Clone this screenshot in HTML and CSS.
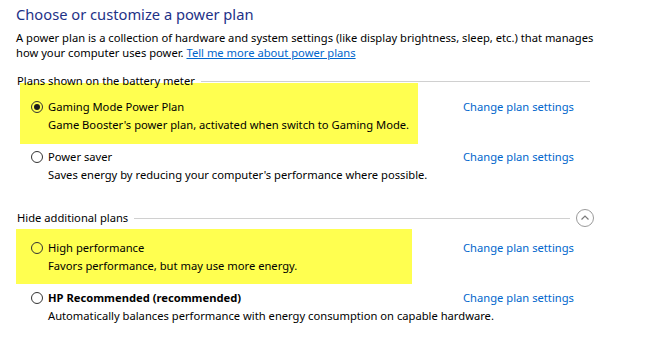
FILE: index.html
```html
<!DOCTYPE html>
<html lang="en">
<head>
  <meta charset="UTF-8" />
  <meta name="viewport" content="width=device-width, initial-scale=1.0" />
  <title>Power Options</title>
  <link rel="stylesheet" href="styles.css">
</head>
<body>
  <main class="page">
    <h1 class="title">Choose or customize a power plan</h1>
    <p class="intro">A power plan is a collection of hardware and system settings (like display brightness, sleep, etc.) that manages<br>how your computer uses power. <a href="#">Tell me more about power plans</a></p>

    <section class="group">
      <div class="group-head">
        <span>Plans shown on the battery meter</span>
        <span class="rule"></span>
      </div>

      <div class="plan">
        <div class="plan-info mark-a">
          <label class="plan-name"><span class="radio checked"></span>Gaming Mode Power Plan</label>
          <div class="plan-desc">Game Booster's power plan, activated when switch to Gaming Mode.</div>
        </div>
        <a class="plan-link" href="#">Change plan settings</a>
      </div>

      <div class="plan">
        <div class="plan-info">
          <label class="plan-name"><span class="radio"></span>Power saver</label>
          <div class="plan-desc">Saves energy by reducing your computer's performance where possible.</div>
        </div>
        <a class="plan-link" href="#">Change plan settings</a>
      </div>
    </section>

    <section class="group group-extra">
      <div class="group-head">
        <span>Hide additional plans</span>
        <span class="rule"></span>
        <button class="collapse" title="Hide">
          <svg width="18" height="18" viewBox="0 0 18 18">
            <circle cx="9" cy="9" r="8.5" fill="none" stroke="#9a9a9a" />
            <path d="M5.5 10.5 L9 7 L12.5 10.5" fill="none" stroke="#7a7a7a" stroke-width="1.2" />
          </svg>
        </button>
      </div>

      <div class="plan">
        <div class="plan-info mark-b">
          <label class="plan-name"><span class="radio"></span>High performance</label>
          <div class="plan-desc">Favors performance, but may use more energy.</div>
        </div>
        <a class="plan-link" href="#">Change plan settings</a>
      </div>

      <div class="plan">
        <div class="plan-info">
          <label class="plan-name bold"><span class="radio"></span>HP Recommended (recommended)</label>
          <div class="plan-desc">Automatically balances performance with energy consumption on capable hardware.</div>
        </div>
        <a class="plan-link" href="#">Change plan settings</a>
      </div>
    </section>
  </main>
</body>
</html>
```

FILE: styles.css
```css
body {
  margin: 0;
  padding: 0;
  background-color: #fff;
  color: #000;
  font-family: "Noto Sans", "Open Sans", sans-serif;
  font-size: 11.2px;
}
.page {
  width: 574px;
  padding: 3px 0 0 16px;
}
.title {
  margin: 0;
  font-size: 14.7px;
  font-weight: normal;
  line-height: 22px;
  color: #1e3287;
}
.intro {
  margin: 5px 0 0;
  line-height: 15px;
  white-space: nowrap;
}
.intro a {
  color: #0066cc;
}
.group {
  margin-top: 13px;
}
.group-head {
  display: flex;
  align-items: center;
  position: relative;
  z-index: 1;
  line-height: 16px;
  margin-left: 1px;
  margin-bottom: 9px;
}
.rule {
  flex: 1;
  height: 1px;
  margin-left: 6px;
  background-color: #d0d0d0;
}
.collapse {
  display: flex;
  width: 18px;
  height: 18px;
  padding: 0;
  margin: 0 -4px 0 6px;
  border: none;
  background: none;
}
.plan {
  display: flex;
  align-items: flex-start;
  padding-left: 15px;
  margin-bottom: 14px;
}
.plan-info {
  width: 387px;
  white-space: nowrap;
}
.plan-name {
  display: flex;
  align-items: center;
  line-height: 18px;
}
.plan-name.bold {
  font-weight: bold;
}
.radio {
  width: 10px;
  height: 10px;
  margin-right: 5px;
  border: 1px solid #333;
  border-radius: 50%;
  position: relative;
}
.radio.checked::after {
  content: "";
  position: absolute;
  top: 2px;
  left: 2px;
  width: 6px;
  height: 6px;
  border-radius: 50%;
  background-color: #1a1a1a;
}
.plan-desc {
  padding-left: 17px;
  line-height: 18px;
}
.plan-link {
  margin-left: 45px;
  line-height: 18px;
  color: #0066cc;
  text-decoration: none;
}
.mark-a {
  background-color: #ffff50;
  margin: -15px 0 -10px -11px;
  padding: 15px 0 10px 11px;
}
.mark-b {
  width: 381px;
  background-color: #ffff50;
  margin: -10px 6px -9px -15px;
  padding: 10px 0 9px 15px;
}
.group-extra {
  margin-top: 25px;
}
.group-extra .group-head {
  margin-bottom: 12px;
}
```
